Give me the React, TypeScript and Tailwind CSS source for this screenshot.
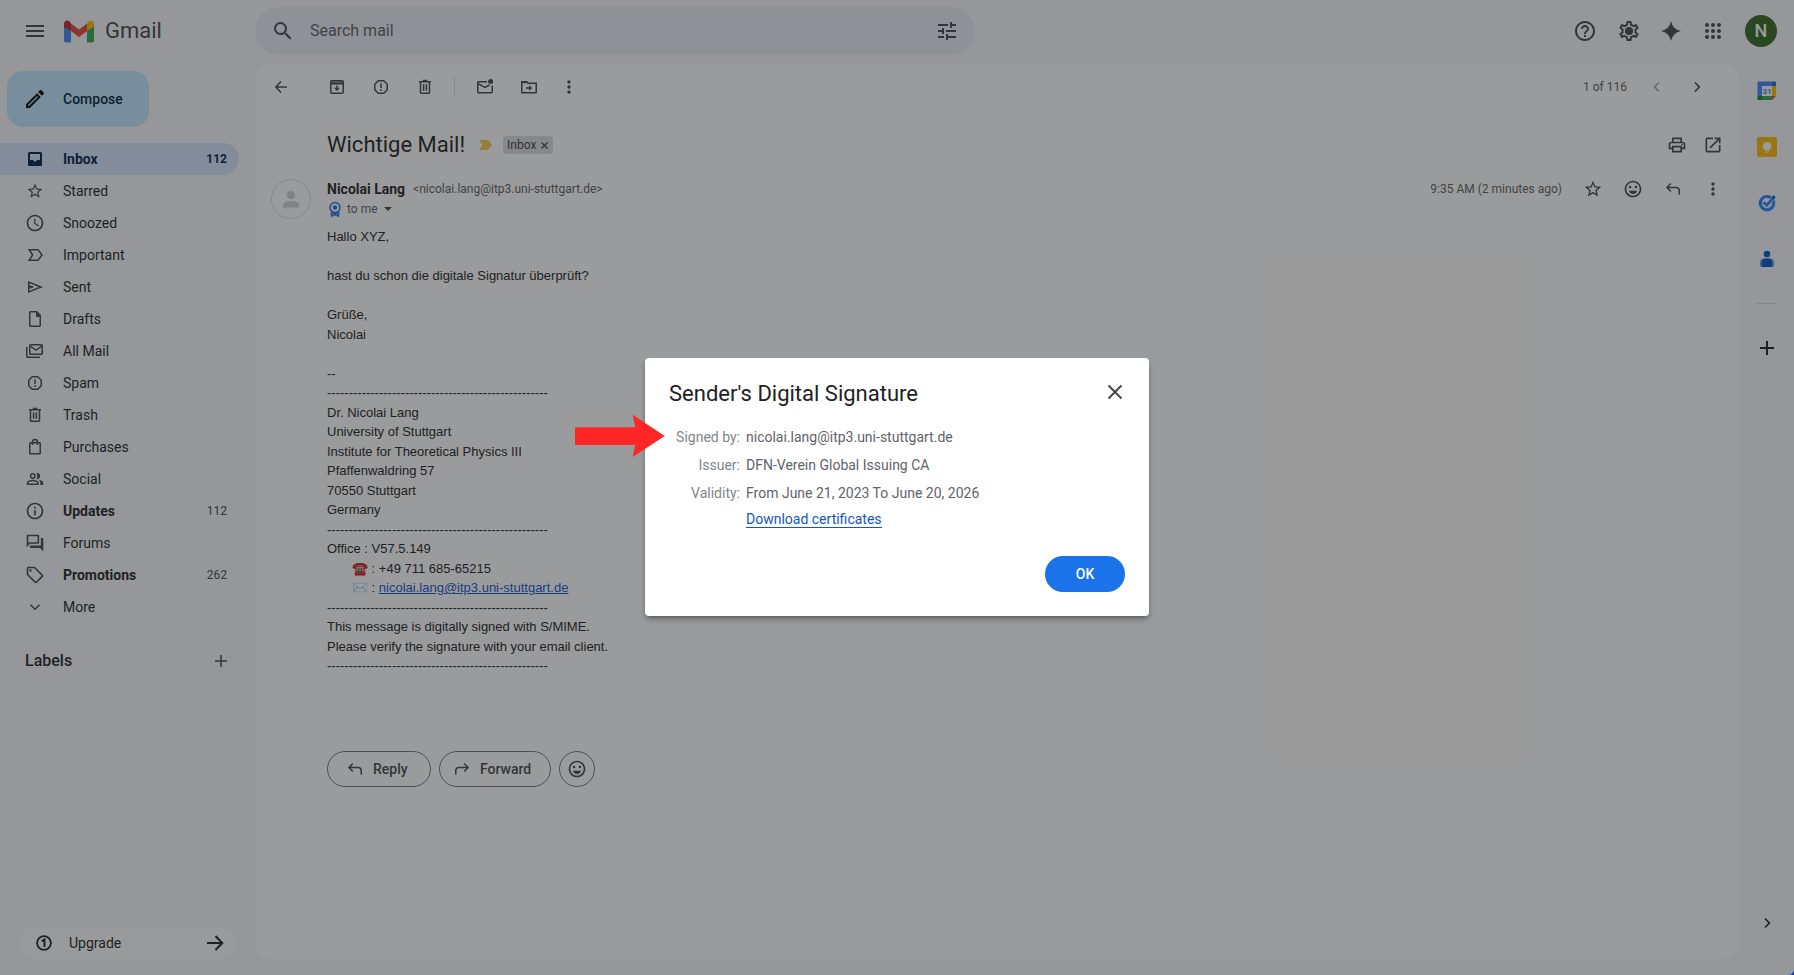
import React from "react";
import {
  MdAccessTime,
  MdHelpOutline,
  MdInfoOutline,
  MdMenu,
  MdMoreVert,
  MdOpenInNew,
  MdOutlineEdit,
  MdOutlineEmojiEmotions,
  MdOutlineLocalOffer,
  MdOutlinePeopleAlt,
  MdOutlinePrint,
  MdOutlineQuestionAnswer,
  MdOutlineSettings,
  MdSearch,
  MdStarBorder,
  MdTune,
} from "react-icons/md";

function Icon({ size = 20, width = 1.5, children }: { size?: number; width?: number; children: React.ReactNode }) {
  return (
    <svg width={size} height={size} viewBox={`0 0 ${size} ${size}`} fill="none" stroke="currentColor" strokeWidth={width} aria-hidden="true">
      {children}
    </svg>
  );
}

const BackIcon = () => (
  <Icon><path d="M16 10H5M10 4.6 4.8 10l5.2 5.4" /></Icon>
);
const ArchiveIcon = () => (
  <Icon>
    <rect x="3.75" y="3.75" width="12.5" height="12.5" rx="1" />
    <path d="M4 5.2h12" strokeWidth={2} opacity="0.7" />
    <path d="M4 6.8h12" />
    <path d="M10 8.5v3" />
    <path d="M7 10.8h6L10 14z" fill="currentColor" stroke="none" />
  </Icon>
);
const ReportIcon = () => (
  <Icon>
    <path d="M7.2 3.75h5.6l3.45 3.45v5.6l-3.45 3.45H7.2L3.75 12.8V7.2z" strokeLinejoin="round" />
    <path d="M10 6.2v4.9M10 12.3v1.7" />
  </Icon>
);
const TrashIcon = () => (
  <Icon>
    <path d="M4 4.7h12M7.8 3.6h4.4" />
    <path d="M5.5 5v10.4q0 .9.9.9h7.2q.9 0 .9-.9V5" />
    <path d="M8.6 7.2v6.6M11.4 7.2v6.6" />
  </Icon>
);
const UnreadIcon = () => (
  <Icon>
    <path d="M12 4.75H3.6q-.85 0-.85.85v9.2q0 .95.95.95h12.6q.95 0 .95-.95V8.5" />
    <path d="m3 6.6 7 3.9 4.5-2.5" />
    <circle cx="15.6" cy="4.6" r="2.5" fill="currentColor" stroke="none" />
  </Icon>
);
const MoveIcon = () => (
  <Icon>
    <path d="M2.75 15.25V4.75h5l1.5 1.6h8v8.9q0 .5-.5.5H3.3q-.55 0-.55-.5z" />
    <path d="M2.5 5.4h6" />
    <path d="M7 11h4" />
    <path d="M10.2 8.2 13.2 11l-3 2.8z" fill="currentColor" stroke="none" />
  </Icon>
);
const InboxIcon = () => (
  <Icon>
    <rect x="3" y="3" width="14" height="14" rx="1.5" fill="currentColor" stroke="none" />
    <path d="M5 5h10v6h-3l-2 2-2-2H5z" fill="#d3e3fd" stroke="none" />
  </Icon>
);
const ImportantIcon = () => (
  <Icon><path d="M4.2 4.75h8.3q.6 0 1 .5L17 10l-3.5 4.75q-.4.5-1 .5H4.2L7.6 10z" /></Icon>
);
const SentIcon = () => (
  <Icon>
    <path d="M3.75 5v10L16 10z" />
    <path d="M3.5 8.9 8 10l-4.5 1.1" />
  </Icon>
);
const DraftIcon = () => (
  <Icon>
    <path d="M11.8 2.75H5.5q-.75 0-.75.75v13q0 .75.75.75h9q.75 0 .75-.75V6.5z" />
    <path d="M11 2.5h1.2L16 6.5V8h-5z" fill="currentColor" stroke="none" />
  </Icon>
);
const AllMailIcon = () => (
  <Icon>
    <rect x="4.75" y="3.75" width="12.5" height="9.5" rx="0.8" />
    <path d="m5 5 6 4.2L17 5" />
    <path d="M1.75 6v9.5q0 .75.75.75H15" />
  </Icon>
);
const BagIcon = () => (
  <Icon>
    <rect x="4.75" y="5.75" width="10.5" height="11" rx="0.8" />
    <path d="M7.5 8V4.9a2.5 2.5 0 0 1 5 0V8" />
  </Icon>
);
const ChevronDown = () => (
  <Icon><path d="m5.5 7.8 4.5 4.4 4.5-4.4" /></Icon>
);
const ChevronLeft = () => (
  <Icon width={1.7}><path d="M12 5.5 7.7 10l4.3 4.5" /></Icon>
);
const ChevronRight = () => (
  <Icon width={1.7}><path d="m8 5.5 4.3 4.5L8 14.5" /></Icon>
);
const ReplyIcon = () => (
  <Icon><path d="M7.8 4.6 4 8.5l3.8 3.9M4 8.5h9q3.25 0 3.25 3.25v3.75" /></Icon>
);
const ForwardIcon = () => (
  <Icon><path d="m12.2 4.6 3.8 3.9-3.8 3.9M16 8.5H7q-3.25 0-3.25 3.25v3.75" /></Icon>
);
const PlusIcon = () => (
  <Icon><path d="M10 4v12M4 10h12" /></Icon>
);
const SparkIcon = () => (
  <Icon size={24}>
    <path d="M12 2q1.6 8.4 10 10-8.4 1.6-10 10Q10.4 13.6 2 12q8.4-1.6 10-10z" fill="currentColor" stroke="none" />
  </Icon>
);
const AppsIcon = () => (
  <Icon size={24}>
    {[6, 12, 18].map((y) => [6, 12, 18].map((x) => <circle key={`${x}-${y}`} cx={x} cy={y} r="2" fill="currentColor" stroke="none" />))}
  </Icon>
);
const OneIcon = () => (
  <Icon width={1.8}>
    <circle cx="10" cy="10" r="6.9" />
    <path d="m7.8 8.3 2.7-1.7V14" strokeWidth={2} />
  </Icon>
);

function GmailLogo() {
  return (
    <svg width="30" height="23" viewBox="0 0 30 23" aria-hidden="true">
      <path d="M0 6h7v16.5H2q-2 0-2-2z" fill="#4285f4" />
      <path d="M23 6h7v14.5q0 2-2 2h-5z" fill="#34a853" />
      <path d="m7 3.5 8 6 8-6V11l-8 6-8-6z" fill="#ea4335" />
      <path d="M23 3.5 24.6 1.2C27-.5 30 1 30 4v2.5L23 11z" fill="#fbbc04" />
      <path d="M7 3.5 5.4 1.2C3-.5 0 1 0 4v2.5L7 11z" fill="#c5221f" />
    </svg>
  );
}

function CalendarLogo() {
  return (
    <svg width="20" height="20" viewBox="0 0 20 20" aria-hidden="true">
      <path d="M1.5.5H15V5H5v10H.5V1.5q0-1 1-1z" fill="#4285f4" />
      <path d="M15 .5h3q1 0 1 1V5h-4z" fill="#1967d2" />
      <path d="M15 5h4v10h-4z" fill="#fbbc04" />
      <path d="M5 15h10v4H5z" fill="#34a853" />
      <path d="M.5 15H5v4H1.5q-1 0-1-1z" fill="#188038" />
      <path d="M15 15h4l-4 4z" fill="#ea4335" />
      <path d="M5 5h10v10H5z" fill="#fff" />
      <text x="10" y="13" textAnchor="middle" fontSize="8" fontWeight="700" fill="#4285f4" fontFamily="Roboto, sans-serif">31</text>
    </svg>
  );
}

function KeepLogo() {
  return (
    <svg width="20" height="20" viewBox="0 0 20 20" aria-hidden="true">
      <rect width="20" height="20" rx="2" fill="#fbbc04" />
      <path d="M10 5a4.2 4.2 0 0 1 2.3 7.7v.8H7.7v-.8A4.2 4.2 0 0 1 10 5zM8 14.5h4v1H8z" fill="#fff" />
    </svg>
  );
}

function TasksLogo() {
  return (
    <svg width="20" height="20" viewBox="0 0 20 20" aria-hidden="true">
      <circle cx="10" cy="10.2" r="6.7" fill="none" stroke="#2684fc" strokeWidth="3.2" />
      <path d="m6.6 9.3 3.1 3L17 4.1" fill="none" stroke="#f6f8fc" strokeWidth="4" />
      <path d="m6.5 9.2 3.2 3.1 7.8-8.8" fill="none" stroke="#2684fc" strokeWidth="2.8" />
      <path d="m14.5 4.5 2.2-2.3 2 1.8-2.4 2.7z" fill="#0066da" />
    </svg>
  );
}

function ContactsLogo() {
  return (
    <svg width="20" height="20" viewBox="0 0 20 20" aria-hidden="true">
      <circle cx="10" cy="5" r="3.3" fill="#0057cc" />
      <path d="M7 9.5h6q4 0 4 4.5v2q0 2-2 2H5q-2 0-2-2v-2q0-4.5 4-4.5z" fill="#5c8df6" />
      <path d="M9 9.5h2q4 0 4 4V18H5v-4.5q0-4 4-4z" fill="#0057cc" />
    </svg>
  );
}

const folders: { name: string; icon: React.ReactNode; count?: string; active?: boolean; bold?: boolean }[] = [
  { name: "Inbox", icon: <InboxIcon />, count: "112", active: true, bold: true },
  { name: "Starred", icon: <MdStarBorder size={18} /> },
  { name: "Snoozed", icon: <MdAccessTime size={20} /> },
  { name: "Important", icon: <ImportantIcon /> },
  { name: "Sent", icon: <SentIcon /> },
  { name: "Drafts", icon: <DraftIcon /> },
  { name: "All Mail", icon: <AllMailIcon /> },
  { name: "Spam", icon: <ReportIcon /> },
  { name: "Trash", icon: <TrashIcon /> },
  { name: "Purchases", icon: <BagIcon /> },
  { name: "Social", icon: <MdOutlinePeopleAlt size={18} /> },
  { name: "Updates", icon: <MdInfoOutline size={20} />, count: "112", bold: true },
  { name: "Forums", icon: <MdOutlineQuestionAnswer size={20} /> },
  { name: "Promotions", icon: <MdOutlineLocalOffer size={20} />, count: "262", bold: true },
  { name: "More", icon: <ChevronDown /> },
];

const rule = "-".repeat(51);

function IconButton({ label, children, className = "w-10" }: { label: string; children: React.ReactNode; className?: string }) {
  return (
    <button type="button" aria-label={label} className={`flex h-10 shrink-0 items-center justify-center ${className}`}>
      {children}
    </button>
  );
}

function Header() {
  return (
    <header className="flex h-[63px] shrink-0 items-center pb-px">
      <div className="flex w-[255px] shrink-0 items-center pl-[15px]">
        <IconButton label="Main menu"><MdMenu size={24} /></IconButton>
        <a href="#inbox" className="ml-[9px] flex items-center gap-[11px] text-[22px] leading-6 text-[#444746]">
          <GmailLogo />
          Gmail
        </a>
      </div>
      <form className="flex h-12 min-w-0 max-w-[720px] flex-1 items-center rounded-full bg-[#e9eef6] px-2">
        <IconButton label="Search"><MdSearch size={24} /></IconButton>
        <input type="text" aria-label="Search mail" placeholder="Search mail" className="ml-[7px] min-w-0 flex-1 bg-transparent text-base outline-none placeholder:text-[#5b5e60]" />
        <IconButton label="Show search options"><MdTune size={24} /></IconButton>
      </form>
      <div className="ml-auto flex items-center pr-[17px]">
        <IconButton label="Support" className="w-11"><MdHelpOutline size={24} /></IconButton>
        <IconButton label="Settings" className="w-11">
          <span className="relative">
            <MdOutlineSettings size={24} />
            <span className="absolute left-2 top-2 size-2 rounded-full bg-current" />
          </span>
        </IconButton>
        <IconButton label="Ask Gemini"><SparkIcon /></IconButton>
        <IconButton label="Google apps" className="w-11"><AppsIcon /></IconButton>
        <button type="button" aria-label="Google Account" className="ml-[10px] size-8 rounded-full bg-[#33691e] text-lg font-medium text-white">N</button>
      </div>
    </header>
  );
}

function Sidebar() {
  return (
    <aside className="flex w-[255px] shrink-0 flex-col">
      <button type="button" className="ml-[7px] mt-2 flex h-14 w-[142px] items-center gap-4 rounded-2xl bg-[#c2e7ff] pl-4 text-sm font-medium text-[#001d35]">
        <MdOutlineEdit size={24} className="text-black" />
        Compose
      </button>
      <nav className="mr-4 mt-4">
        {folders.map((f) => (
          <a
            key={f.name}
            href="#inbox"
            className={`flex h-8 items-center rounded-r-full pl-[25px] pr-3 text-sm ${f.active ? "bg-[#d3e3fd] text-[#041e49]" : "text-[#1f1f1f]"}`}
          >
            <span className={`flex w-5 justify-center ${f.active ? "" : "text-[#444746]"}`}>{f.icon}</span>
            <span className={`ml-[18px] flex-1 ${f.bold ? "font-bold" : ""}`}>{f.name}</span>
            {f.count ? <span className={`text-xs ${f.active ? "font-bold" : "text-[#444746]"}`}>{f.count}</span> : null}
          </a>
        ))}
      </nav>
      <div className="mt-[18px] flex h-10 items-center justify-between pl-[25px] pr-6">
        <h2 className="text-base font-medium text-[#1f1f1f]">Labels</h2>
        <button type="button" aria-label="Create new label"><PlusIcon /></button>
      </div>
      <button type="button" className="mx-5 mt-auto flex h-8 items-center rounded-full bg-white/70 pl-[14px] pr-[10px] text-sm text-[#1f1f1f]">
        <OneIcon />
        <span className="ml-[15px] flex-1 text-left">Upgrade</span>
        <Icon width={2}><path d="M2 10h15M10.5 3l6.8 7-6.800 7" /></Icon>
      </button>
    </aside>
  );
}

function Toolbar() {
  return (
    <div className="flex h-12 items-center pl-[6px]">
      <IconButton label="Back to Inbox"><BackIcon /></IconButton>
      <div className="ml-[14px] flex items-center">
        <IconButton label="Archive" className="w-11"><ArchiveIcon /></IconButton>
        <IconButton label="Report spam" className="w-11"><ReportIcon /></IconButton>
        <IconButton label="Delete" className="w-11"><TrashIcon /></IconButton>
      </div>
      <div className="ml-[7px] h-5 w-px bg-[#dadce0]" />
      <div className="ml-2 flex items-center">
        <IconButton label="Mark as unread" className="w-11"><UnreadIcon /></IconButton>
        <IconButton label="Move to" className="w-11"><MoveIcon /></IconButton>
        <IconButton label="More" className="w-9"><MdMoreVert size={20} /></IconButton>
      </div>
      <span className="ml-auto text-xs text-[#5e5e5e]">1 of 116</span>
      <div className="ml-[10px] flex items-center pr-[22px]">
        <span className="text-[#a8a9aa]"><IconButton label="Newer"><ChevronLeft /></IconButton></span>
        <IconButton label="Older"><ChevronRight /></IconButton>
      </div>
    </div>
  );
}

function Message() {
  return (
    <article className="mt-[6px] flex-1 pb-8">
      <div className="flex h-14 items-center pl-[72px] pr-2">
        <h1 className="text-[22px] leading-7 text-[#1f1f1f]">Wichtige Mail!</h1>
        <svg width="14" height="10" viewBox="0 0 14 10" className="ml-[14px]" aria-label="Important">
          <path d="M0 0h8q1 0 1.5.7L13 5 9.5 9.300Q9 10 8 10H0l3.500-5z" fill="#f7cb4d" />
        </svg>
        <span className="ml-[10px] flex h-[18px] items-center gap-1 rounded bg-[#ddd] px-1 text-xs text-[#444]">
          Inbox
          <button type="button" aria-label="Remove label Inbox">
            <svg width="9" height="9" viewBox="0 0 9 9" stroke="currentColor" strokeWidth="1.3"><path d="m1.5 1.5 6 6m0-6-6 6" /></svg>
          </button>
        </span>
        <div className="ml-auto flex">
          <IconButton label="Print all" className="w-9"><MdOutlinePrint size={20} /></IconButton>
          <IconButton label="In new window" className="w-9"><MdOpenInNew size={20} /></IconButton>
        </div>
      </div>

      <div className="flex pt-[6px]">
        <div className="w-[72px] shrink-0 pl-4">
          <div className="flex size-10 items-center justify-center rounded-full border border-[#dadce0] text-[#cfd0d2]">
            <svg width="40" height="40" viewBox="0 0 40 40" className="shrink-0" fill="currentColor" aria-hidden="true">
              <circle cx="20" cy="16" r="4" />
              <path d="M12 28.500v-2q0-4.500 8-4.500t8 4.500v2z" />
            </svg>
          </div>
        </div>
        <div className="min-w-0 flex-1">
          <div className="flex h-5 items-center pr-[6px]">
            <h3 className="text-sm font-bold text-[#1f1f1f]">Nicolai Lang</h3>
            <span className="ml-2 text-xs text-[#5e5e5e]">&lt;nicolai.lang@itp3.uni-stuttgart.de&gt;</span>
            <span className="ml-auto mr-[11px] text-xs text-[#5e5e5e]">9:35 AM (2 minutes ago)</span>
            <div className="flex">
              <IconButton label="Star"><MdStarBorder size={20} /></IconButton>
              <IconButton label="Add reaction"><MdOutlineEmojiEmotions size={20} /></IconButton>
              <IconButton label="Reply"><ReplyIcon /></IconButton>
              <IconButton label="More options"><MdMoreVert size={20} /></IconButton>
            </div>
          </div>
          <div className="flex h-5 items-center text-xs text-[#5e5e5e]">
            <svg width="16" height="16" viewBox="0 0 16 16" fill="none" stroke="#1a73e8" aria-label="Signed">
              <circle cx="8" cy="6.5" r="5" strokeWidth="1.5" />
              <circle cx="8" cy="6.5" r="2.2" fill="#1a73e8" stroke="none" />
              <path d="M4.5 10.500V15L8 13.500l3.500 1.500v-4.500M5 12.200h6" strokeWidth="1.5" />
            </svg>
            <span className="ml-1">to me</span>
            <button type="button" aria-label="Show details" className="ml-[6px]">
              <svg width="8" height="4" viewBox="0 0 8 4" fill="#444746"><path d="M0 0h8L4 4z" /></svg>
            </button>
          </div>

          <div className="mt-2 whitespace-pre-wrap font-['Liberation_Sans',Arial,sans-serif] text-[13px] leading-normal text-[#222]">
            <p>Hallo XYZ,</p>
            <br />
            <p>hast du schon die digitale Signatur überprüft?</p>
            <br />
            <p>Grüße,</p>
            <p>Nicolai</p>
            <br />
            <p>--</p>
            <p>{rule}</p>
            <p>Dr. Nicolai Lang</p>
            <p>University of Stuttgart</p>
            <p>Institute for Theoretical Physics III</p>
            <p>Pfaffenwaldring 57</p>
            <p>70550 Stuttgart</p>
            <p>Germany</p>
            <p>{rule}</p>
            <p>Office : V57.5.149</p>
            <p className="pl-[25px]">☎️ : +49 711 685-65215</p>
            <p className="pl-[25px]">✉️ : <a href="mailto:nicolai.lang@itp3.uni-stuttgart.de" className="text-[#1155cc] underline">nicolai.lang@itp3.uni-stuttgart.de</a></p>
            <p>{rule}</p>
            <p>This message is digitally signed with S/MIME.</p>
            <p>Please verify the signature with your email client.</p>
            <p>{rule}</p>
          </div>

          <div className="mt-[75px] flex gap-2 text-sm font-medium text-[#444746]">
            <button type="button" className="flex h-9 w-[104px] items-center gap-2 rounded-full border border-[#747775] pl-[17px]">
              <ReplyIcon />
              Reply
            </button>
            <button type="button" className="flex h-9 w-28 items-center gap-2 rounded-full border border-[#747775] pl-3">
              <ForwardIcon />
              Forward
            </button>
            <button type="button" aria-label="Add reaction" className="flex size-9 items-center justify-center rounded-full border border-[#747775]">
              <MdOutlineEmojiEmotions size={20} />
            </button>
          </div>
        </div>
      </div>
    </article>
  );
}

function SidePanel() {
  return (
    <aside className="flex w-[55px] shrink-0 flex-col items-center pt-2">
      <div className="flex flex-col gap-4">
        <IconButton label="Calendar"><CalendarLogo /></IconButton>
        <IconButton label="Keep"><KeepLogo /></IconButton>
        <IconButton label="Tasks"><TasksLogo /></IconButton>
        <IconButton label="Contacts"><ContactsLogo /></IconButton>
      </div>
      <div className="my-6 h-px w-5 bg-[#d8dadd]" />
      <div className="text-[#1f1f1f]"><IconButton label="Get add-ons"><Icon width={2}><path d="M10 3v14M3 10h14" /></Icon></IconButton></div>
      <div className="mb-4 mt-auto text-[#1f1f1f]"><IconButton label="Hide side panel"><ChevronRight /></IconButton></div>
    </aside>
  );
}

function SignatureDialog() {
  return (
    <div className="absolute inset-0 flex items-center justify-center bg-[#202124]/45 pb-px">
      <div role="dialog" aria-labelledby="dialog-title" className="relative w-[504px] rounded bg-white p-6 shadow-md shadow-black/30">
        <div className="flex h-6 items-center justify-between">
          <h2 id="dialog-title" className="text-[22px] leading-6 text-[#202124]">Sender's Digital Signature</h2>
          <button type="button" aria-label="Close" className="-mt-1 text-[#444746]">
            <Icon width={2}><path d="m3.5 3.5 13 13m0-13-13 13" /></Icon>
          </button>
        </div>
        <table className="mt-[17px] text-sm">
          <tbody className="text-[#5f6368]">
            <tr className="h-7">
              <th scope="row" className="w-[71px] p-0 text-right font-normal text-[#80868b]">Signed by:</th>
              <td className="py-0 pl-[6px]">nicolai.lang@itp3.uni-stuttgart.de</td>
            </tr>
            <tr className="h-7">
              <th scope="row" className="p-0 text-right font-normal text-[#80868b]">Issuer:</th>
              <td className="py-0 pl-[6px]">DFN-Verein Global Issuing CA</td>
            </tr>
            <tr className="h-7">
              <th scope="row" className="p-0 text-right font-normal text-[#80868b]">Validity:</th>
              <td className="py-0 pl-[6px]">From June 21, 2023 To June 20, 2026</td>
            </tr>
            <tr className="h-6">
              <td />
              <td className="py-0 pl-[6px]"><a href="#certificates" className="border-b border-[#1155cc] text-[#1155cc]">Download certificates</a></td>
            </tr>
          </tbody>
        </table>
        <div className="mt-[25px] flex justify-end">
          <button type="button" className="h-9 w-20 rounded-full bg-[#1a73e8] text-sm font-medium text-white">OK</button>
        </div>
        <svg width="90" height="44" viewBox="0 0 90 44" className="absolute -left-[70px] top-14" aria-hidden="true">
          <path d="M0 13.300h60.300L57.700.7 89.700 22l-32 21 2.600-12H0z" fill="#ff2626" />
        </svg>
      </div>
    </div>
  );
}

export default function App() {
  return (
    <div className="bg-blue-900 font-[Roboto,sans-serif] text-[#444746]">
      <div className="relative flex min-h-screen flex-col overflow-hidden rounded-br-md bg-[#f6f8fc]">
        <Header />
        <div className="flex flex-1 pb-4">
          <Sidebar />
          <main className="flex min-w-0 flex-1 flex-col rounded-2xl bg-white">
            <Toolbar />
            <Message />
          </main>
          <SidePanel />
        </div>
        <SignatureDialog />
      </div>
    </div>
  );
}
